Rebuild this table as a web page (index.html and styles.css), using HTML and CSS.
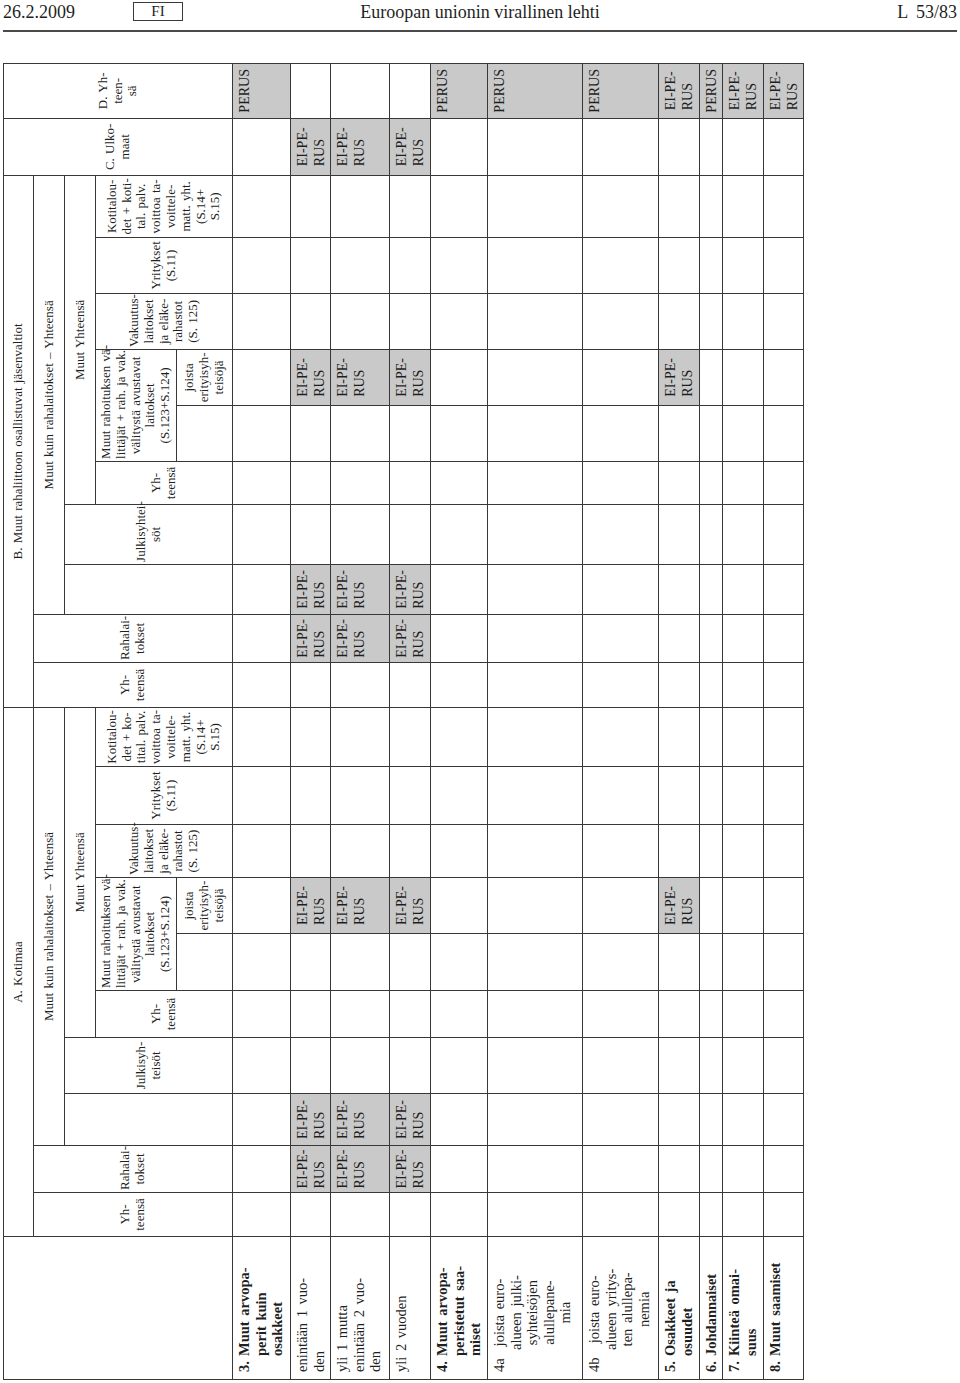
FILE: index.html
```html
<!DOCTYPE html>
<html lang="fi">
<head>
<meta charset="utf-8">
<title>Euroopan unionin virallinen lehti L 53/83</title>
<link rel="stylesheet" href="styles.css">
</head>
<body>
<div class="page">
  <header class="masthead">
    <div class="mh-left"><span class="date">26.2.2009</span><span class="lang">FI</span></div>
    <div class="title">Euroopan unionin virallinen lehti</div>
    <div class="pageno">L 53/83</div>
  </header>
  <div class="rotbox">
    <table class="grid">
      <colgroup>
        <col class="w143"><col class="w44"><col class="w47"><col class="w52"><col class="w56"><col class="w47"><col class="w57"><col class="w56"><col class="w53"><col class="w58"><col class="w59">
        <col class="w45"><col class="w48"><col class="w50"><col class="w60"><col class="w43"><col class="w56"><col class="w56"><col class="w56"><col class="w56"><col class="w62">
        <col class="w57"><col class="w55">
      </colgroup>
      <tr class="h1">
        <td class="corner" rowspan="5"></td>
        <th colspan="10">A. Kotimaa</th>
        <th colspan="10">B. Muut rahaliittoon osallistuvat jäsenvaltiot</th>
        <th rowspan="5">C. Ulko-<br>maat</th>
        <th rowspan="5">D. Yh-<br>teen-<br>sä</th>
      </tr>
      <tr class="h2">
        <th rowspan="4">Yh-<br>teensä</th>
        <th rowspan="4">Rahalai-<br>tokset</th>
        <th colspan="8">Muut kuin rahalaitokset – Yhteensä</th>
        <th rowspan="4">Yh-<br>teensä</th>
        <th rowspan="4">Rahalai-<br>tokset</th>
        <th colspan="8">Muut kuin rahalaitokset – Yhteensä</th>
      </tr>
      <tr class="h3">
        <th rowspan="3"></th>
        <th rowspan="3">Julkisyh-<br>teisöt</th>
        <th colspan="6">Muut Yhteensä</th>
        <th rowspan="3"></th>
        <th rowspan="3">Julkisyhtei-<br>söt</th>
        <th colspan="6">Muut Yhteensä</th>
      </tr>
      <tr class="h4">
        <th rowspan="2">Yh-<br>teensä</th>
        <th colspan="2">Muut rahoituksen vä-<br>littäjät + rah. ja vak.<br>välitystä avustavat<br>laitokset<br>(S.123+S.124)</th>
        <th rowspan="2">Vakuutus-<br>laitokset<br>ja eläke-<br>rahastot<br>(S. 125)</th>
        <th rowspan="2">Yritykset<br>(S.11)</th>
        <th rowspan="2">Kotitalou-<br>det + ko-<br>tital. palv.<br>voittoa ta-<br>voittele-<br>matt. yht.<br>(S.14+<br>S.15)</th>
        <th rowspan="2">Yh-<br>teensä</th>
        <th colspan="2">Muut rahoituksen vä-<br>littäjät + rah. ja vak.<br>välitystä avustavat<br>laitokset<br>(S.123+S.124)</th>
        <th rowspan="2">Vakuutus-<br>laitokset<br>ja eläke-<br>rahastot<br>(S. 125)</th>
        <th rowspan="2">Yritykset<br>(S.11)</th>
        <th rowspan="2">Kotitalou-<br>det + koti-<br>tal. palv.<br>voittoa ta-<br>voittele-<br>matt. yht.<br>(S.14+<br>S.15)</th>
      </tr>
      <tr class="h5">
        <th></th>
        <th>joista<br>erityisyh-<br>teisöjä</th>
        <th></th>
        <th>joista<br>erityisyh-<br>teisöjä</th>
      </tr>

      <tr class="r58">
        <td class="lbl b"><div class="item"><span class="num">3.</span><span class="txt">Muut arvopa-<br>perit kuin<br>osakkeet</span></div></td>
        <td></td><td></td><td></td><td></td><td></td><td></td><td></td><td></td><td></td><td></td>
        <td></td><td></td><td></td><td></td><td></td><td></td><td></td><td></td><td></td><td></td>
        <td></td>
        <td class="g"><span class="ep">PERUS</span></td>
      </tr>
      <tr class="r40">
        <td class="lbl">enintään 1 vuo-<br>den</td>
        <td></td>
        <td class="g"><span class="ep">EI-PE-<br>RUS</span></td>
        <td class="g"><span class="ep">EI-PE-<br>RUS</span></td>
        <td></td><td></td><td></td>
        <td class="g"><span class="ep">EI-PE-<br>RUS</span></td>
        <td></td><td></td><td></td>
        <td></td>
        <td class="g"><span class="ep">EI-PE-<br>RUS</span></td>
        <td class="g"><span class="ep">EI-PE-<br>RUS</span></td>
        <td></td><td></td><td></td>
        <td class="g"><span class="ep">EI-PE-<br>RUS</span></td>
        <td></td><td></td><td></td>
        <td class="g"><span class="ep">EI-PE-<br>RUS</span></td>
        <td></td>
      </tr>
      <tr class="r59">
        <td class="lbl">yli 1 mutta<br>enintään 2 vuo-<br>den</td>
        <td></td>
        <td class="g"><span class="ep">EI-PE-<br>RUS</span></td>
        <td class="g"><span class="ep">EI-PE-<br>RUS</span></td>
        <td></td><td></td><td></td>
        <td class="g"><span class="ep">EI-PE-<br>RUS</span></td>
        <td></td><td></td><td></td>
        <td></td>
        <td class="g"><span class="ep">EI-PE-<br>RUS</span></td>
        <td class="g"><span class="ep">EI-PE-<br>RUS</span></td>
        <td></td><td></td><td></td>
        <td class="g"><span class="ep">EI-PE-<br>RUS</span></td>
        <td></td><td></td><td></td>
        <td class="g"><span class="ep">EI-PE-<br>RUS</span></td>
        <td></td>
      </tr>
      <tr class="r41">
        <td class="lbl">yli 2 vuoden</td>
        <td></td>
        <td class="g"><span class="ep">EI-PE-<br>RUS</span></td>
        <td class="g"><span class="ep">EI-PE-<br>RUS</span></td>
        <td></td><td></td><td></td>
        <td class="g"><span class="ep">EI-PE-<br>RUS</span></td>
        <td></td><td></td><td></td>
        <td></td>
        <td class="g"><span class="ep">EI-PE-<br>RUS</span></td>
        <td class="g"><span class="ep">EI-PE-<br>RUS</span></td>
        <td></td><td></td><td></td>
        <td class="g"><span class="ep">EI-PE-<br>RUS</span></td>
        <td></td><td></td><td></td>
        <td class="g"><span class="ep">EI-PE-<br>RUS</span></td>
        <td></td>
      </tr>
      <tr class="r57">
        <td class="lbl b"><div class="item"><span class="num">4.</span><span class="txt">Muut arvopa-<br>peristetut saa-<br>miset</span></div></td>
        <td></td><td></td><td></td><td></td><td></td><td></td><td></td><td></td><td></td><td></td>
        <td></td><td></td><td></td><td></td><td></td><td></td><td></td><td></td><td></td><td></td>
        <td></td>
        <td class="g"><span class="ep">PERUS</span></td>
      </tr>
      <tr class="r95">
        <td class="lbl"><div class="item"><span class="num n2">4a</span><span class="txt c">joista euro-<br>alueen julki-<br>syhteisöjen<br>alullepane-<br>mia</span></div></td>
        <td></td><td></td><td></td><td></td><td></td><td></td><td></td><td></td><td></td><td></td>
        <td></td><td></td><td></td><td></td><td></td><td></td><td></td><td></td><td></td><td></td>
        <td></td>
        <td class="g"><span class="ep">PERUS</span></td>
      </tr>
      <tr class="r76">
        <td class="lbl"><div class="item"><span class="num n2">4b</span><span class="txt c">joista euro-<br>alueen yritys-<br>ten alullepa-<br>nemia</span></div></td>
        <td></td><td></td><td></td><td></td><td></td><td></td><td></td><td></td><td></td><td></td>
        <td></td><td></td><td></td><td></td><td></td><td></td><td></td><td></td><td></td><td></td>
        <td></td>
        <td class="g"><span class="ep">PERUS</span></td>
      </tr>
      <tr class="r41">
        <td class="lbl b"><div class="item"><span class="num">5.</span><span class="txt">Osakkeet ja<br>osuudet</span></div></td>
        <td></td><td></td><td></td><td></td><td></td><td></td>
        <td class="g"><span class="ep">EI-PE-<br>RUS</span></td>
        <td></td><td></td><td></td><td></td><td></td><td></td><td></td><td></td><td></td>
        <td class="g"><span class="ep">EI-PE-<br>RUS</span></td>
        <td></td><td></td><td></td><td></td>
        <td class="g"><span class="ep">EI-PE-<br>RUS</span></td>
      </tr>
      <tr class="r23">
        <td class="lbl b"><div class="item"><span class="num">6.</span><span class="txt">Johdannaiset</span></div></td>
        <td></td><td></td><td></td><td></td><td></td><td></td><td></td><td></td><td></td><td></td>
        <td></td><td></td><td></td><td></td><td></td><td></td><td></td><td></td><td></td><td></td>
        <td></td>
        <td class="g"><span class="ep">PERUS</span></td>
      </tr>
      <tr class="r41">
        <td class="lbl b"><div class="item"><span class="num">7.</span><span class="txt">Kiinteä omai-<br>suus</span></div></td>
        <td></td><td></td><td></td><td></td><td></td><td></td><td></td><td></td><td></td><td></td>
        <td></td><td></td><td></td><td></td><td></td><td></td><td></td><td></td><td></td><td></td>
        <td></td>
        <td class="g"><span class="ep">EI-PE-<br>RUS</span></td>
      </tr>
      <tr class="r40">
        <td class="lbl b"><div class="item"><span class="num">8.</span><span class="txt">Muut saamiset</span></div></td>
        <td></td><td></td><td></td><td></td><td></td><td></td><td></td><td></td><td></td><td></td>
        <td></td><td></td><td></td><td></td><td></td><td></td><td></td><td></td><td></td><td></td>
        <td></td>
        <td class="g"><span class="ep">EI-PE-<br>RUS</span></td>
      </tr>
    </table>
  </div>
</div>
</body>
</html>
```

FILE: styles.css
```css
html, body {
  margin: 0;
  padding: 0;
  background: #ffffff;
}

body {
  font-family: "Liberation Serif", "Times New Roman", serif;
  color: #1f1f1f;
}

.page {
  width: 960px;
  height: 1383px;
  overflow: hidden;
}

/* ---------- masthead ---------- */
.masthead {
  display: grid;
  grid-template-columns: 1fr auto 1fr;
  align-items: start;
  height: 30px;
  margin: 0 3px;
  border-bottom: 2px solid #4a4a4a;
  font-size: 18px;
  line-height: 22px;
}

.mh-left {
  display: flex;
  align-items: flex-start;
  padding-top: 1px;
}

.date {
  width: 130px;
}

.lang {
  box-sizing: border-box;
  width: 50px;
  height: 19px;
  margin-top: 1px;
  border: 1px solid #3a3a3a;
  text-align: center;
  font-size: 15px;
  line-height: 17px;
}

.title {
  padding-top: 1px;
  text-align: center;
}

.pageno {
  padding-top: 1px;
  text-align: right;
  word-spacing: 4px;
}

/* ---------- rotated table ---------- */
.rotbox {
  width: 800px;
  height: 1316px;
  margin: 32px 0 0 3px;
}

.grid {
  border-collapse: collapse;
  table-layout: fixed;
  width: 1316px;
  height: 800px;
  transform-origin: 0 0;
  transform: translateY(1316px) rotate(-90deg);
}

.grid th,
.grid td {
  border: 1px solid #383838;
  padding: 0;
}

.grid th {
  font-weight: normal;
  font-size: 13px;
  line-height: 14.8px;
  text-align: center;
  vertical-align: middle;
  white-space: nowrap;
  word-spacing: 1px;
  padding: 1px 2px;
}

.grid td {
  vertical-align: top;
  font-size: 14px;
  line-height: 17px;
  padding: 3px 2px 0;
}

.grid td.g {
  background: #c9c9c9;
  text-align: center;
}

.ep {
  display: inline-block;
  text-align: left;
}

.grid td.lbl {
  padding: 3px 6px 0 7px;
  font-size: 14.5px;
  line-height: 16.5px;
  word-spacing: 2px;
  white-space: nowrap;
}

.b {
  font-weight: bold;
}

.item {
  display: flex;
}

.num {
  flex: none;
  width: 16px;
}

.num.n2 {
  width: 22px;
}

.txt.c {
  text-align: center;
}

/* column widths (original orientation) */
.w43 { width: 43px; }
.w44 { width: 44px; }
.w45 { width: 45px; }
.w47 { width: 47px; }
.w48 { width: 48px; }
.w50 { width: 50px; }
.w52 { width: 52px; }
.w53 { width: 53px; }
.w55 { width: 55px; }
.w56 { width: 56px; }
.w57 { width: 57px; }
.w58 { width: 58px; }
.w59 { width: 59px; }
.w60 { width: 60px; }
.w62 { width: 62px; }
.w143 { width: 143px; }

/* row heights (original orientation) */
.h1 { height: 30px; }
.h2 { height: 31px; }
.h3 { height: 31px; }
.h4 { height: 81px; }
.h5 { height: 56px; }
.r23 { height: 23px; }
.r40 { height: 40px; }
.r41 { height: 41px; }
.r57 { height: 57px; }
.r58 { height: 58px; }
.r59 { height: 59px; }
.r76 { height: 76px; }
.r95 { height: 95px; }
```
